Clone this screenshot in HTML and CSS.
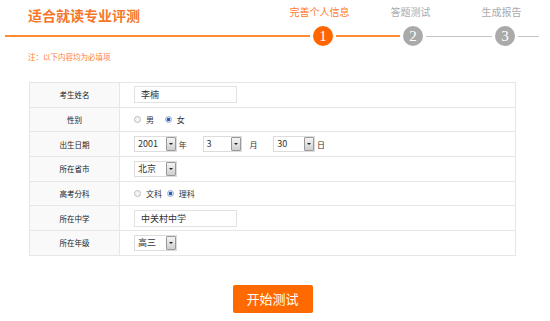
FILE: index.html
```html
<!DOCTYPE html>
<html lang="zh-CN">
<head>
    <meta charset="UTF-8">
    <meta name="viewport" content="width=device-width, initial-scale=1.0">
    <title>适合就读专业评测</title>
    <link rel="stylesheet" href="styles.css">
</head>
<body>
    <div class="top">
        <div class="title">适合就读专业评测</div>
        <div class="labels">
            <span class="label active">完善个人信息</span>
            <span class="label">答题测试</span>
            <span class="label">生成报告</span>
        </div>
    </div>

    <!-- step line -->
    <div class="steps">
        <div class="line line-first"></div>
        <div class="circle active">1</div>
        <div class="line line-a"></div>
        <div class="circle">2</div>
        <div class="line line-b gray"></div>
        <div class="circle">3</div>
        <div class="line line-c gray"></div>
    </div>

    <p class="note">注：以下内容均为必填项</p>

    <div class="form">
        <table class="info">
            <tr>
                <td class="name">考生姓名</td>
                <td><input class="text" type="text" value="李楠"></td>
            </tr>
            <tr>
                <td class="name">性别</td>
                <td>
                    <label class="radio"><input type="radio" name="sex"> 男</label>
                    <label class="radio"><input type="radio" name="sex" checked> 女</label>
                </td>
            </tr>
            <tr>
                <td class="name">出生日期</td>
                <td>
                    <span class="sel w-year"><span class="val">2001</span><span class="arrow"></span></span>
                    <span class="unit">年</span>
                    <span class="sel w-month"><span class="val">3</span><span class="arrow"></span></span>
                    <span class="unit wide">月</span>
                    <span class="sel w-day"><span class="val">30</span><span class="arrow"></span></span>
                    <span class="unit">日</span>
                </td>
            </tr>
            <tr>
                <td class="name">所在省市</td>
                <td><span class="sel w-year"><span class="val">北京</span><span class="arrow"></span></span></td>
            </tr>
            <tr>
                <td class="name">高考分科</td>
                <td>
                    <label class="radio"><input type="radio" name="kind"> 文科</label>
                    <label class="radio tight"><input type="radio" name="kind" checked> 理科</label>
                </td>
            </tr>
            <tr>
                <td class="name">所在中学</td>
                <td><input class="text" type="text" value="中关村中学"></td>
            </tr>
            <tr>
                <td class="name">所在年级</td>
                <td><span class="sel w-year"><span class="val">高三</span><span class="arrow"></span></span></td>
            </tr>
        </table>

        <button class="start">开始测试</button>
    </div>
</body>
</html>
```

FILE: styles.css
```css
body {
    margin: 0;
    font-family: "Noto Sans CJK SC", "Liberation Sans", sans-serif;
    background: #fff;
    color: #333;
}
.top {
    display: flex;
    justify-content: space-between;
    height: 26px;
}
.title {
    margin: 6px 0 0 28px;
    font-size: 14px;
    line-height: 18px;
    font-weight: bold;
    color: #f5772a;
}
.labels {
    display: flex;
    margin: 6px 3px 0 0;
}
.label {
    width: 91px;
    text-align: center;
    font-size: 10px;
    line-height: 12px;
    color: #aaa;
}
.label.active {
    color: #ff7a2a;
}
.steps {
    display: flex;
    align-items: center;
    height: 20px;
    margin: 0 11px 0 5px;
}
.line {
    height: 2px;
    background: #ff8a33;
}
.line.gray {
    height: 1px;
    background: #c4c4c4;
}
.line-first { flex: 1; }
.line-a { width: 64px; }
.line-b { width: 66px; }
.line-c { width: 21px; }
.circle {
    width: 20px;
    height: 20px;
    margin: 0 3px;
    border-radius: 50%;
    background: #aaa;
    color: #fff;
    font-family: "Liberation Serif", serif;
    font-size: 15px;
    line-height: 20px;
    text-align: center;
}
.circle.active {
    background: #ff6600;
}
.note {
    margin: 6px 0 0 28px;
    font-size: 7.5px;
    line-height: 10px;
    color: #ff7f3a;
}
.form {
    width: 487px;
    margin: 20px 0 0 29px;
    text-align: center;
}
.info {
    width: 100%;
    border-collapse: collapse;
    text-align: left;
}
.info td {
    height: 23.7px;
    padding: 0 0 0 14px;
    border: 1px solid #e6e6e6;
    font-size: 8px;
    white-space: nowrap;
}
.info td.name {
    width: 89px;
    padding: 0;
    background: #f9f9f9;
    text-align: center;
    font-size: 7.5px;
    color: #222;
}
.text {
    width: 103px;
    height: 17px;
    box-sizing: border-box;
    padding: 0 6px;
    border: 1px solid #e2e2e2;
    font-family: "Noto Sans CJK SC", sans-serif;
    font-size: 9px;
    color: #333;
    vertical-align: middle;
}
.radio {
    display: inline-flex;
    align-items: center;
    margin-right: 9px;
}
.radio.tight {
    margin-left: -6px;
}
.radio input {
    appearance: none;
    width: 7px;
    height: 7px;
    margin: 0 5px 0 0;
    border: 1px solid #bbb;
    border-radius: 50%;
    background: #f4f4f4;
}
.radio input:checked {
    background: radial-gradient(circle, #1f64c4 0 40%, #cfdcf0 50%);
    border-color: #9fb2cc;
}
.sel {
    display: inline-flex;
    align-items: stretch;
    height: 16px;
    box-sizing: border-box;
    border: 1px solid #dcdcdc;
    vertical-align: middle;
}
.sel .val {
    flex: 1;
    padding-left: 3px;
    font-size: 9px;
    line-height: 14px;
}
.w-year { width: 43px; }
.w-month { width: 39px; }
.w-day { width: 42px; }
.arrow {
    position: relative;
    width: 8px;
    border: 1px solid #999;
    border-radius: 1px;
    background: linear-gradient(#f4f4f4, #cfcfcf);
}
.arrow::before {
    content: "";
    position: absolute;
    left: 2px;
    top: 5px;
    border-left: 2px solid transparent;
    border-right: 2px solid transparent;
    border-top: 2px solid #222;
}
.unit {
    display: inline-block;
    margin: 0 14px 0 0;
    font-size: 8px;
    vertical-align: middle;
}
.unit.wide {
    margin-left: 6px;
}
.start {
    margin-top: 29px;
    width: 80px;
    height: 28px;
    border: none;
    border-radius: 2px;
    background: #ff6a00;
    color: #fff;
    font-family: "Noto Sans CJK SC", sans-serif;
    font-size: 13px;
    cursor: pointer;
}
```
